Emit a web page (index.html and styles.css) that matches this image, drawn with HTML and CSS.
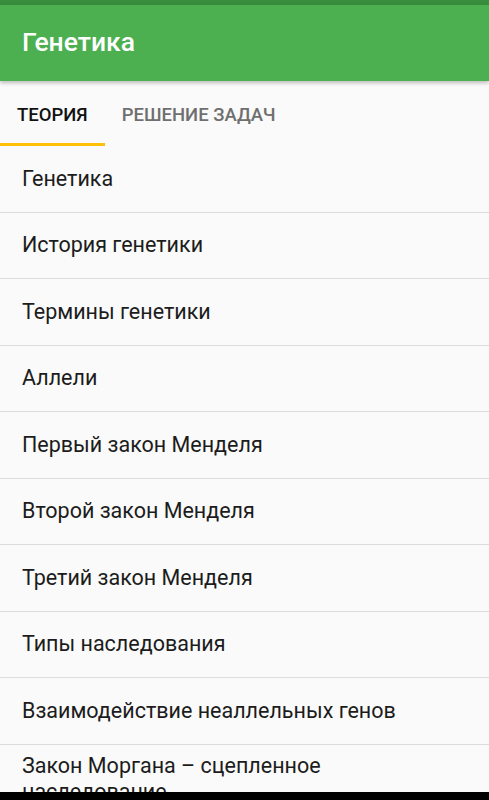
FILE: index.html
```html
<!DOCTYPE html>
<html lang="ru">
<head>
    <meta charset="UTF-8">
    <meta name="viewport" content="width=device-width, initial-scale=1.0">
    <title>Генетика</title>
    <link rel="stylesheet" href="styles.css">
</head>
<body>
    <div class="status-bar"></div>
    <header class="toolbar">
        <h1>Генетика</h1>
    </header>
    <nav class="tabs">
        <a class="tab active" href="#">Теория</a>
        <a class="tab" href="#">Решение задач</a>
    </nav>
    <ul class="topics">
        <li>Генетика</li>
        <li>История генетики</li>
        <li>Термины генетики</li>
        <li>Аллели</li>
        <li>Первый закон Менделя</li>
        <li>Второй закон Менделя</li>
        <li>Третий закон Менделя</li>
        <li>Типы наследования</li>
        <li>Взаимодействие неаллельных генов</li>
        <li>Закон Моргана – сцепленное наследование</li>
    </ul>
    <div class="nav-bar"></div>
</body>
</html>
```

FILE: styles.css
```css
body {
    font-family: Roboto, "Noto Sans", sans-serif;
    margin: 0;
    padding: 0;
    background-color: #fafafa;
    color: #1c1c1c;
    height: 800px;
    overflow: hidden;
    position: relative;
}
.status-bar {
    height: 5px;
    background-color: #388e3c;
}
.toolbar {
    height: 76px;
    background-color: #4caf50;
    display: flex;
    align-items: center;
    padding: 0 22px;
    box-shadow: 0 2px 4px rgba(0, 0, 0, 0.25);
    position: relative;
    z-index: 1;
}
.toolbar h1 {
    margin: 0;
    color: #ffffff;
    font-size: 26.5px;
    font-weight: 500;
    margin-top: -4px;
}
.tabs {
    display: flex;
    height: 65px;
}
.tab {
    display: flex;
    align-items: center;
    padding: 5px 17px 0;
    font-size: 18.5px;
    font-weight: 500;
    text-transform: uppercase;
    text-decoration: none;
    color: #6f6f6f;
    border-bottom: 3px solid transparent;
    box-sizing: border-box;
}
.tab.active {
    color: #111111;
    border-bottom-color: #ffc107;
}
.topics {
    list-style: none;
    margin: 0;
    padding: 0;
}
.topics li {
    display: flex;
    align-items: center;
    min-height: 66.5px;
    box-sizing: border-box;
    padding: 8px 30px 8px 22px;
    font-size: 21.5px;
    line-height: 26px;
    border-bottom: 1.5px solid #dcdcdc;
}
.nav-bar {
    position: absolute;
    left: 0;
    right: 0;
    bottom: 0;
    height: 8px;
    background-color: #000000;
}
```
